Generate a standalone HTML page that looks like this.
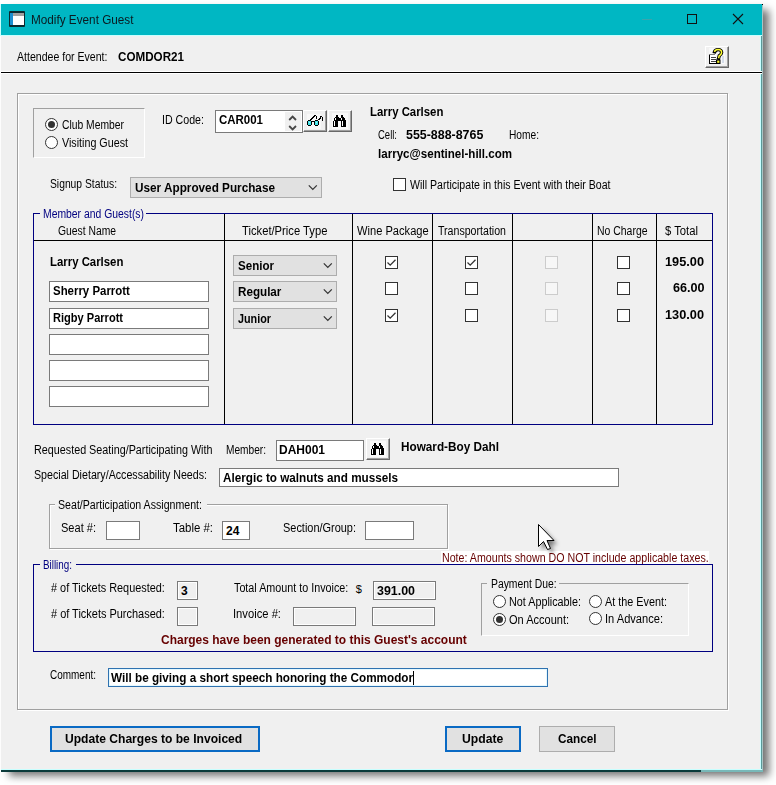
<!DOCTYPE html>
<html><head><meta charset="utf-8"><style>
html,body{margin:0;padding:0;}
body{width:776px;height:785px;position:relative;overflow:hidden;background:#fff;font-family:"Liberation Sans",sans-serif;}
.a{position:absolute;box-sizing:border-box;}
.t{position:absolute;white-space:nowrap;transform-origin:0 0;font-family:"Liberation Sans",sans-serif;}
</style></head><body>
<div class="a" style="left:1px;top:4px;width:762px;height:768px;background:#f0f0f0;box-shadow:7px 5px 8px -1px rgba(0,0,0,0.55);"></div>
<div class="a" style="left:0px;top:4px;width:1px;height:32px;background:#c8ffff;"></div>
<div class="a" style="left:760px;top:35px;width:1px;height:735px;background:#c8ffff;"></div>
<div class="a" style="left:761px;top:4px;width:1px;height:768px;background:#5a9a9a;"></div>
<div class="a" style="left:762px;top:4px;width:1px;height:768px;background:#a8c4c4;"></div>
<div class="a" style="left:1px;top:769px;width:761px;height:1px;background:#c8ffff;"></div>
<div class="a" style="left:1px;top:770px;width:700px;height:2px;background:#0a3a3a;"></div>
<div class="a" style="left:701px;top:770px;width:62px;height:2px;background:#78b8b8;"></div>
<div class="a" style="left:1px;top:4px;width:761px;height:31px;background:#00b7c3;"></div>
<div class="a" style="left:762px;top:4px;width:1px;height:1px;background:#000;"></div>
<div class="a" style="left:1px;top:35px;width:761px;height:1px;background:#c8ffff;"></div>
<div class="a" style="left:9px;top:11px;width:16px;height:16px;background:#0a2a30;border-radius:1px"></div>
<div class="a" style="left:10px;top:13px;width:14px;height:12px;background:#fff"></div>
<div class="a" style="left:10px;top:13px;width:3px;height:12px;background:#1a8fd0"></div>
<div class="a" style="left:13px;top:13px;width:11px;height:3px;background:#a0a0a0"></div>
<div id="tx0" class="t" style="left:30.5px;top:13.24px;font-size:12px;line-height:15px;font-weight:400;color:#0a1a20;transform:scaleX(0.9788);">Modify Event Guest</div>
<div class="a" style="left:642px;top:19px;width:10px;height:1px;background:#3aa5ad"></div>
<div class="a" style="left:687px;top:14px;width:10px;height:10px;border:1px solid #111;box-sizing:border-box"></div>
<svg class="a" style="left:732px;top:13px" width="12" height="12" viewBox="0 0 12 12"><path d="M1 1 L11 11 M11 1 L1 11" stroke="#111" stroke-width="1.1"/></svg>
<div id="tx1" class="t" style="left:17.3px;top:50.04px;font-size:12px;line-height:15px;font-weight:400;color:#000;transform:scaleX(0.8799);">Attendee for Event:</div>
<div id="tx2" class="t" style="left:118px;top:50.04px;font-size:12px;line-height:15px;font-weight:700;color:#000;transform:scaleX(0.9704);">COMDOR21</div>
<div class="a" style="left:705px;top:46px;width:24px;height:22px;background:#f0f0f0;border-top:1px solid #fff;border-left:1px solid #fff;border-right:1px solid #696969;border-bottom:1px solid #696969;box-shadow:inset -1px -1px 0 #a0a0a0;"></div>
<svg class="a" style="left:705px;top:46px" width="24" height="22" viewBox="0 0 24 22" shape-rendering="crispEdges">
<rect x="4" y="2" width="16" height="16" fill="#f8f8f8"/>
<rect x="4" y="8" width="6" height="1" fill="#808080"/>
<rect x="4" y="9" width="1" height="9" fill="#000"/>
<rect x="4" y="17" width="8" height="1" fill="#000"/>
<rect x="5" y="9" width="6" height="8" fill="#fff"/>
<rect x="6" y="11" width="5" height="1" fill="#404040"/>
<rect x="6" y="13" width="5" height="1" fill="#404040"/>
<rect x="6" y="15" width="5" height="1" fill="#404040"/>
<rect x="17" y="10" width="2" height="7" fill="#d4dce8"/>
</svg>
<svg class="a" style="left:705px;top:46px" width="24" height="22" viewBox="0 0 24 22">
<path d="M9.5 5.8 Q10 3.6 13 3.6 Q16.6 3.6 16.6 6.6 Q16.4 8.6 14.2 9.8 L13.6 12.2" fill="none" stroke="#000" stroke-width="3.4" stroke-linecap="square"/>
<path d="M9.5 5.8 Q10 3.6 13 3.6 Q16.6 3.6 16.6 6.6 Q16.4 8.6 14.2 9.8 L13.6 12.2" fill="none" stroke="#ffff30" stroke-width="1.5"/>
<rect x="11" y="13.5" width="4.5" height="4.5" fill="#000"/>
<rect x="12.2" y="14.6" width="2.2" height="2.2" fill="#ffff30"/>
</svg>
<div class="a" style="left:1px;top:71px;width:761px;height:1px;background:#fff;"></div>
<div class="a" style="left:1px;top:72px;width:761px;height:1px;background:#000;"></div>
<div class="a" style="left:1px;top:73px;width:761px;height:1px;background:#fff;"></div>
<div class="a" style="left:18px;top:94px;width:711px;height:617px;border:1px solid #fff;"></div>
<div class="a" style="left:17px;top:93px;width:711px;height:617px;border:1px solid #a0a0a0;"></div>
<div class="a" style="left:33px;top:108px;width:112px;height:50px;border-top:1px solid #a0a0a0;border-left:1px solid #a0a0a0;border-right:1px solid #fff;border-bottom:1px solid #fff;"></div>
<div class="a" style="left:45px;top:118px;width:13px;height:13px;border:1px solid #333;border-radius:50%;background:#fff;"><div style="position:absolute;left:2px;top:2px;width:7px;height:7px;border-radius:50%;background:#333"></div></div>
<div id="tx3" class="t" style="left:62px;top:118.04px;font-size:12px;line-height:15px;font-weight:400;color:#000;transform:scaleX(0.8593);">Club Member</div>
<div class="a" style="left:45px;top:136px;width:13px;height:13px;border:1px solid #333;border-radius:50%;background:#fff;"></div>
<div id="tx4" class="t" style="left:62px;top:136.04px;font-size:12px;line-height:15px;font-weight:400;color:#000;transform:scaleX(0.8940);">Visiting Guest</div>
<div id="tx5" class="t" style="left:161.5px;top:113.04px;font-size:12px;line-height:15px;font-weight:400;color:#000;transform:scaleX(0.8868);">ID Code:</div>
<div class="a" style="left:215px;top:110px;width:88px;height:23px;border:1px solid #7a7a7a;background:#fff;"></div>
<div id="tx6" class="t" style="left:218.6px;top:113.04px;font-size:12px;line-height:15px;font-weight:700;color:#000;transform:scaleX(0.9559);">CAR001</div>
<div class="a" style="left:285px;top:112px;width:16px;height:19px;background:#f0f0f0;"></div>
<svg class="a" style="left:286px;top:112px" width="14" height="19" viewBox="0 0 14 19"><path d="M3.2 8 L6.6 4.6 L10 8 M3.2 14 L6.6 17.4 L10 14" fill="none" stroke="#454545" stroke-width="1.8"/></svg>
<div class="a" style="left:303px;top:110px;width:24px;height:22px;background:#f0f0f0;border-top:1px solid #fff;border-left:1px solid #fff;border-right:1px solid #696969;border-bottom:1px solid #696969;box-shadow:inset -1px -1px 0 #a0a0a0;"></div>
<svg class="a" style="left:304px;top:112px" width="22" height="18" viewBox="0 0 22 18" shape-rendering="crispEdges"><rect x="3" y="2" width="14" height="15" fill="#f8f8f8"/><rect x="4" y="8" width="3" height="1" fill="#000"/><rect x="4" y="13" width="3" height="1" fill="#000"/><rect x="3" y="9" width="1" height="4" fill="#000"/><rect x="7" y="9" width="1" height="4" fill="#000"/><rect x="4" y="9" width="3" height="4" fill="#3ee0e6"/><rect x="5" y="10" width="1" height="1" fill="#a8f4f4"/><rect x="11" y="8" width="3" height="1" fill="#000"/><rect x="11" y="13" width="3" height="1" fill="#000"/><rect x="10" y="9" width="1" height="4" fill="#000"/><rect x="14" y="9" width="1" height="4" fill="#000"/><rect x="11" y="9" width="3" height="4" fill="#3ee0e6"/><rect x="12" y="10" width="1" height="1" fill="#a8f4f4"/><rect x="8" y="9" width="2" height="1" fill="#000"/><rect x="6" y="7" width="1" height="1" fill="#000"/><rect x="7" y="7" width="1" height="1" fill="#000"/><rect x="7" y="6" width="1" height="1" fill="#000"/><rect x="8" y="6" width="1" height="1" fill="#000"/><rect x="8" y="5" width="1" height="1" fill="#000"/><rect x="9" y="5" width="1" height="1" fill="#000"/><rect x="9" y="4" width="1" height="1" fill="#000"/><rect x="10" y="4" width="1" height="1" fill="#000"/><rect x="10" y="3" width="2" height="1" fill="#000"/><rect x="12" y="4" width="1" height="3" fill="#000"/><rect x="14" y="7" width="1" height="1" fill="#000"/><rect x="15" y="7" width="1" height="1" fill="#000"/><rect x="15" y="6" width="1" height="1" fill="#000"/><rect x="16" y="6" width="1" height="1" fill="#000"/><rect x="16" y="5" width="1" height="1" fill="#000"/><rect x="16" y="4" width="2" height="1" fill="#000"/><rect x="18" y="5" width="1" height="4" fill="#000"/></svg>
<div class="a" style="left:328px;top:110px;width:24px;height:22px;background:#f0f0f0;border-top:1px solid #fff;border-left:1px solid #fff;border-right:1px solid #696969;border-bottom:1px solid #696969;box-shadow:inset -1px -1px 0 #a0a0a0;"></div>
<div class="a" style="left:332px;top:113px;width:16px;height:16px;background:#fafafa"></div>
<svg class="a" style="left:333px;top:115px" width="13" height="12" viewBox="0 0 13 12" shape-rendering="crispEdges"><rect x="3" y="0" width="2" height="2" fill="#000"/><rect x="8" y="0" width="2" height="2" fill="#000"/><rect x="2" y="2" width="4" height="1" fill="#000"/><rect x="8" y="2" width="3" height="1" fill="#000"/><rect x="1" y="3" width="11" height="2" fill="#000"/><rect x="1" y="5" width="12" height="1" fill="#000"/><rect x="0" y="6" width="5" height="6" fill="#000"/><rect x="8" y="6" width="5" height="6" fill="#000"/><rect x="2" y="3" width="1" height="2" fill="#fff"/><rect x="8" y="3" width="1" height="2" fill="#fff"/><rect x="1" y="6" width="1" height="5" fill="#fff"/><rect x="9" y="6" width="1" height="5" fill="#fff"/></svg>
<div id="tx7" class="t" style="left:370px;top:105.04px;font-size:12px;line-height:15px;font-weight:700;color:#000;transform:scaleX(0.9486);">Larry Carlsen</div>
<div id="tx8" class="t" style="left:377.5px;top:128.34px;font-size:12px;line-height:15px;font-weight:400;color:#000;transform:scaleX(0.7912);">Cell:</div>
<div id="tx9" class="t" style="left:406px;top:127.92px;font-size:12.5px;line-height:15.5px;font-weight:700;color:#000;transform:scaleX(0.9928);">555-888-8765</div>
<div id="tx10" class="t" style="left:508.7px;top:128.34px;font-size:12px;line-height:15px;font-weight:400;color:#000;transform:scaleX(0.8488);">Home:</div>
<div id="tx11" class="t" style="left:377.5px;top:147.04px;font-size:12px;line-height:15px;font-weight:700;color:#000;transform:scaleX(0.9635);">larryc@sentinel-hill.com</div>
<div id="tx12" class="t" style="left:50px;top:177.04px;font-size:12px;line-height:15px;font-weight:400;color:#000;transform:scaleX(0.8583);">Signup Status:</div>
<div class="a" style="left:130px;top:177px;width:192px;height:21px;border:1px solid #adadad;background:#e1e1e1;"></div>
<svg class="a" style="left:308px;top:184.0px" width="10" height="8" viewBox="0 0 10 8"><path d="M0.8 1.4 L4.8 5.4 L8.8 1.4" fill="none" stroke="#333" stroke-width="1.25"/></svg>
<div id="tx13" class="t" style="left:135px;top:181.34px;font-size:12px;line-height:15px;font-weight:700;color:#000;transform:scaleX(0.9793);">User Approved Purchase</div>
<div class="a" style="left:393px;top:178px;width:13px;height:13px;border:1px solid #333;background:#fff;"></div>
<div id="tx14" class="t" style="left:409.5px;top:178.04px;font-size:12px;line-height:15px;font-weight:400;color:#000;transform:scaleX(0.8816);">Will Participate in this Event with their Boat</div>
<div class="a" style="left:33px;top:213px;width:680px;height:212px;border:1px solid #000080;"></div>
<div class="a" style="left:40px;top:210px;width:106px;height:7px;background:#f0f0f0;"></div>
<div id="tx15" class="t" style="left:43px;top:207.04px;font-size:12px;line-height:15px;font-weight:400;color:#000080;transform:scaleX(0.8653);">Member and Guest(s)</div>
<div class="a" style="left:224px;top:214px;width:1px;height:210px;background:#000;"></div>
<div class="a" style="left:352px;top:214px;width:1px;height:210px;background:#000;"></div>
<div class="a" style="left:432px;top:214px;width:1px;height:210px;background:#000;"></div>
<div class="a" style="left:512px;top:214px;width:1px;height:210px;background:#000;"></div>
<div class="a" style="left:592px;top:214px;width:1px;height:210px;background:#000;"></div>
<div class="a" style="left:656px;top:214px;width:1px;height:210px;background:#000;"></div>
<div class="a" style="left:34px;top:240px;width:678px;height:1px;background:#000;"></div>
<div id="tx16" class="t" style="left:57.6px;top:224.04px;font-size:12px;line-height:15px;font-weight:400;color:#000;transform:scaleX(0.8611);">Guest Name</div>
<div id="tx17" class="t" style="left:242px;top:224.04px;font-size:12px;line-height:15px;font-weight:400;color:#000;transform:scaleX(0.9346);">Ticket/Price Type</div>
<div id="tx18" class="t" style="left:357px;top:224.04px;font-size:12px;line-height:15px;font-weight:400;color:#000;transform:scaleX(0.9267);">Wine Package</div>
<div id="tx19" class="t" style="left:437.5px;top:224.04px;font-size:12px;line-height:15px;font-weight:400;color:#000;transform:scaleX(0.8838);">Transportation</div>
<div id="tx20" class="t" style="left:597.4px;top:224.04px;font-size:12px;line-height:15px;font-weight:400;color:#000;transform:scaleX(0.8702);">No Charge</div>
<div id="tx21" class="t" style="left:665.4px;top:224.04px;font-size:12px;line-height:15px;font-weight:400;color:#000;transform:scaleX(0.9391);">$ Total</div>
<div id="tx22" class="t" style="left:49.7px;top:255.04px;font-size:12px;line-height:15px;font-weight:700;color:#000;transform:scaleX(0.9486);">Larry Carlsen</div>
<div class="a" style="left:49px;top:281px;width:160px;height:21px;border:1px solid #7a7a7a;background:#fff;"></div>
<div id="tx23" class="t" style="left:53px;top:283.54px;font-size:12px;line-height:15px;font-weight:700;color:#000;transform:scaleX(0.9529);">Sherry Parrott</div>
<div class="a" style="left:49px;top:308px;width:160px;height:21px;border:1px solid #7a7a7a;background:#fff;"></div>
<div id="tx24" class="t" style="left:53px;top:310.54px;font-size:12px;line-height:15px;font-weight:700;color:#000;transform:scaleX(0.9209);">Rigby Parrott</div>
<div class="a" style="left:49px;top:334px;width:160px;height:21px;border:1px solid #7a7a7a;background:#fff;"></div>
<div class="a" style="left:49px;top:360px;width:160px;height:21px;border:1px solid #7a7a7a;background:#fff;"></div>
<div class="a" style="left:49px;top:386px;width:160px;height:21px;border:1px solid #7a7a7a;background:#fff;"></div>
<div class="a" style="left:233px;top:255px;width:104px;height:21px;border:1px solid #adadad;background:#e1e1e1;"></div>
<svg class="a" style="left:323px;top:262.0px" width="10" height="8" viewBox="0 0 10 8"><path d="M0.8 1.4 L4.8 5.4 L8.8 1.4" fill="none" stroke="#333" stroke-width="1.25"/></svg>
<div id="tx25" class="t" style="left:238px;top:259.04px;font-size:12px;line-height:15px;font-weight:700;color:#000;transform:scaleX(0.9640);">Senior</div>
<div class="a" style="left:233px;top:281px;width:104px;height:21px;border:1px solid #adadad;background:#e1e1e1;"></div>
<svg class="a" style="left:323px;top:288.0px" width="10" height="8" viewBox="0 0 10 8"><path d="M0.8 1.4 L4.8 5.4 L8.8 1.4" fill="none" stroke="#333" stroke-width="1.25"/></svg>
<div id="tx26" class="t" style="left:238px;top:285.04px;font-size:12px;line-height:15px;font-weight:700;color:#000;transform:scaleX(0.9712);">Regular</div>
<div class="a" style="left:233px;top:308px;width:104px;height:21px;border:1px solid #adadad;background:#e1e1e1;"></div>
<svg class="a" style="left:323px;top:315.0px" width="10" height="8" viewBox="0 0 10 8"><path d="M0.8 1.4 L4.8 5.4 L8.8 1.4" fill="none" stroke="#333" stroke-width="1.25"/></svg>
<div id="tx27" class="t" style="left:238px;top:312.04px;font-size:12px;line-height:15px;font-weight:700;color:#000;transform:scaleX(0.8999);">Junior</div>
<div class="a" style="left:385px;top:256px;width:13px;height:13px;border:1px solid #333;background:#fff;"><svg width="11" height="11" viewBox="0 0 11 11" style="position:absolute;left:0;top:0"><path d="M1.5 5.5 L4.2 8.2 L9.5 2.8" fill="none" stroke="#333" stroke-width="1.3"/></svg></div>
<div class="a" style="left:465px;top:256px;width:13px;height:13px;border:1px solid #333;background:#fff;"><svg width="11" height="11" viewBox="0 0 11 11" style="position:absolute;left:0;top:0"><path d="M1.5 5.5 L4.2 8.2 L9.5 2.8" fill="none" stroke="#333" stroke-width="1.3"/></svg></div>
<div class="a" style="left:545px;top:256px;width:13px;height:13px;border:1px solid #cccccc;background:#f7f7f7;"></div>
<div class="a" style="left:617px;top:256px;width:13px;height:13px;border:1px solid #333;background:#fff;"></div>
<div class="a" style="left:385px;top:282px;width:13px;height:13px;border:1px solid #333;background:#fff;"></div>
<div class="a" style="left:465px;top:282px;width:13px;height:13px;border:1px solid #333;background:#fff;"></div>
<div class="a" style="left:545px;top:282px;width:13px;height:13px;border:1px solid #cccccc;background:#f7f7f7;"></div>
<div class="a" style="left:617px;top:282px;width:13px;height:13px;border:1px solid #333;background:#fff;"></div>
<div class="a" style="left:385px;top:309px;width:13px;height:13px;border:1px solid #333;background:#fff;"><svg width="11" height="11" viewBox="0 0 11 11" style="position:absolute;left:0;top:0"><path d="M1.5 5.5 L4.2 8.2 L9.5 2.8" fill="none" stroke="#333" stroke-width="1.3"/></svg></div>
<div class="a" style="left:465px;top:309px;width:13px;height:13px;border:1px solid #333;background:#fff;"></div>
<div class="a" style="left:545px;top:309px;width:13px;height:13px;border:1px solid #cccccc;background:#f7f7f7;"></div>
<div class="a" style="left:617px;top:309px;width:13px;height:13px;border:1px solid #333;background:#fff;"></div>
<div id="tx28" class="t" style="left:665.3px;top:255.04px;font-size:12px;line-height:15px;font-weight:700;color:#000;transform:scaleX(1.0626);">195.00</div>
<div id="tx29" class="t" style="left:672.6999999999999px;top:281.04px;font-size:12px;line-height:15px;font-weight:700;color:#000;transform:scaleX(1.0522);">66.00</div>
<div id="tx30" class="t" style="left:665.3px;top:308.04px;font-size:12px;line-height:15px;font-weight:700;color:#000;transform:scaleX(1.0626);">130.00</div>
<div id="tx31" class="t" style="left:33.5px;top:443.04px;font-size:12px;line-height:15px;font-weight:400;color:#000;transform:scaleX(0.8980);">Requested Seating/Participating With</div>
<div id="tx32" class="t" style="left:225.6px;top:443.04px;font-size:12px;line-height:15px;font-weight:400;color:#000;transform:scaleX(0.8449);">Member:</div>
<div class="a" style="left:276px;top:440px;width:88px;height:21px;border:1px solid #7a7a7a;background:#fff;"></div>
<div id="tx33" class="t" style="left:279px;top:443.04px;font-size:12px;line-height:15px;font-weight:700;color:#000;transform:scaleX(0.9993);">DAH001</div>
<div class="a" style="left:366px;top:438px;width:24px;height:22px;background:#f0f0f0;border-top:1px solid #fff;border-left:1px solid #fff;border-right:1px solid #696969;border-bottom:1px solid #696969;box-shadow:inset -1px -1px 0 #a0a0a0;"></div>
<div class="a" style="left:370px;top:441px;width:16px;height:16px;background:#fafafa"></div>
<svg class="a" style="left:371px;top:443px" width="13" height="12" viewBox="0 0 13 12" shape-rendering="crispEdges"><rect x="3" y="0" width="2" height="2" fill="#000"/><rect x="8" y="0" width="2" height="2" fill="#000"/><rect x="2" y="2" width="4" height="1" fill="#000"/><rect x="8" y="2" width="3" height="1" fill="#000"/><rect x="1" y="3" width="11" height="2" fill="#000"/><rect x="1" y="5" width="12" height="1" fill="#000"/><rect x="0" y="6" width="5" height="6" fill="#000"/><rect x="8" y="6" width="5" height="6" fill="#000"/><rect x="2" y="3" width="1" height="2" fill="#fff"/><rect x="8" y="3" width="1" height="2" fill="#fff"/><rect x="1" y="6" width="1" height="5" fill="#fff"/><rect x="9" y="6" width="1" height="5" fill="#fff"/></svg>
<div id="tx34" class="t" style="left:401px;top:440.04px;font-size:12px;line-height:15px;font-weight:700;color:#000;transform:scaleX(0.9798);">Howard-Boy Dahl</div>
<div id="tx35" class="t" style="left:33.5px;top:468.04px;font-size:12px;line-height:15px;font-weight:400;color:#000;transform:scaleX(0.8883);">Special Dietary/Accessability Needs:</div>
<div class="a" style="left:219px;top:468px;width:400px;height:19px;border:1px solid #7a7a7a;background:#fff;"></div>
<div id="tx36" class="t" style="left:223px;top:471.04px;font-size:12px;line-height:15px;font-weight:700;color:#000;transform:scaleX(0.9755);">Alergic to walnuts and mussels</div>
<div class="a" style="left:50px;top:505px;width:399px;height:45px;border:1px solid #fff;"></div>
<div class="a" style="left:49px;top:504px;width:399px;height:45px;border:1px solid #a0a0a0;"></div>
<div class="a" style="left:55px;top:500px;width:152px;height:9px;background:#f0f0f0;"></div>
<div id="tx37" class="t" style="left:58.4px;top:498.04px;font-size:12px;line-height:15px;font-weight:400;color:#000;transform:scaleX(0.8847);">Seat/Participation Assignment:</div>
<div id="tx38" class="t" style="left:61.2px;top:521.04px;font-size:12px;line-height:15px;font-weight:400;color:#000;transform:scaleX(0.9203);">Seat #:</div>
<div class="a" style="left:106px;top:521px;width:34px;height:19px;border:1px solid #7a7a7a;background:#fff;"></div>
<div id="tx39" class="t" style="left:173.2px;top:521.04px;font-size:12px;line-height:15px;font-weight:400;color:#000;transform:scaleX(0.9517);">Table #:</div>
<div class="a" style="left:222px;top:521px;width:28px;height:19px;border:1px solid #7a7a7a;background:#fff;"></div>
<div id="tx40" class="t" style="left:226px;top:524.04px;font-size:12px;line-height:15px;font-weight:700;color:#000;">24</div>
<div id="tx41" class="t" style="left:282.5px;top:521.04px;font-size:12px;line-height:15px;font-weight:400;color:#000;transform:scaleX(0.9120);">Section/Group:</div>
<div class="a" style="left:365px;top:521px;width:49px;height:19px;border:1px solid #7a7a7a;background:#fff;"></div>
<div class="a" style="left:441px;top:551px;width:268px;height:13px;background:#fff;"></div>
<div id="tx42" class="t" style="left:441.5px;top:551.04px;font-size:12px;line-height:15px;font-weight:400;color:#660000;transform:scaleX(0.8872);">Note: Amounts shown DO NOT include applicable taxes.</div>
<div class="a" style="left:33px;top:564px;width:680px;height:88px;border:1px solid #000080;"></div>
<div class="a" style="left:40px;top:560px;width:36px;height:9px;background:#f0f0f0;"></div>
<div id="tx43" class="t" style="left:43px;top:558.04px;font-size:12px;line-height:15px;font-weight:400;color:#000080;transform:scaleX(0.8202);">Billing:</div>
<div id="tx44" class="t" style="left:50.8px;top:581.04px;font-size:12px;line-height:15px;font-weight:400;color:#000;transform:scaleX(0.9082);"># of Tickets Requested:</div>
<div class="a" style="left:177px;top:581px;width:21px;height:19px;border:1px solid #7a7a7a;background:#f0f0f0;box-shadow:inset 0 0 0 1px #fff;"></div>
<div id="tx45" class="t" style="left:181px;top:584.04px;font-size:12px;line-height:15px;font-weight:700;color:#000;">3</div>
<div id="tx46" class="t" style="left:50.8px;top:607.04px;font-size:12px;line-height:15px;font-weight:400;color:#000;transform:scaleX(0.9131);"># of Tickets Purchased:</div>
<div class="a" style="left:177px;top:607px;width:21px;height:19px;border:1px solid #7a7a7a;background:#f0f0f0;box-shadow:inset 0 0 0 1px #fff;"></div>
<div id="tx47" class="t" style="left:234px;top:581.04px;font-size:12px;line-height:15px;font-weight:400;color:#000;transform:scaleX(0.8971);">Total Amount to Invoice:</div>
<div id="tx48" class="t" style="left:355.7px;top:581.89px;font-size:11px;line-height:14px;font-weight:400;color:#000;">$</div>
<div class="a" style="left:373px;top:581px;width:63px;height:19px;border:1px solid #7a7a7a;background:#f0f0f0;box-shadow:inset 0 0 0 1px #fff;"></div>
<div id="tx49" class="t" style="left:377px;top:584.04px;font-size:12px;line-height:15px;font-weight:700;color:#000;transform:scaleX(1.0353);">391.00</div>
<div id="tx50" class="t" style="left:233.4px;top:607.04px;font-size:12px;line-height:15px;font-weight:400;color:#000;transform:scaleX(0.9343);">Invoice #:</div>
<div class="a" style="left:293px;top:607px;width:63px;height:19px;border:1px solid #7a7a7a;background:#f0f0f0;box-shadow:inset 0 0 0 1px #fff;"></div>
<div class="a" style="left:372px;top:607px;width:63px;height:19px;border:1px solid #7a7a7a;background:#f0f0f0;box-shadow:inset 0 0 0 1px #fff;"></div>
<div id="tx51" class="t" style="left:161.4px;top:633.04px;font-size:12px;line-height:15px;font-weight:700;color:#660000;transform:scaleX(0.9984);">Charges have been generated to this Guest's account</div>
<div class="a" style="left:481px;top:583px;width:208px;height:53px;border-top:1px solid #a0a0a0;border-left:1px solid #a0a0a0;border-right:1px solid #fff;border-bottom:1px solid #fff;"></div>
<div class="a" style="left:487px;top:579px;width:72px;height:10px;background:#f0f0f0;"></div>
<div id="tx52" class="t" style="left:490.7px;top:577.04px;font-size:12px;line-height:15px;font-weight:400;color:#000;transform:scaleX(0.8639);">Payment Due:</div>
<div class="a" style="left:493px;top:595px;width:13px;height:13px;border:1px solid #333;border-radius:50%;background:#fff;"></div>
<div id="tx53" class="t" style="left:509px;top:595.04px;font-size:12px;line-height:15px;font-weight:400;color:#000;transform:scaleX(0.8993);">Not Applicable:</div>
<div class="a" style="left:589px;top:595px;width:13px;height:13px;border:1px solid #333;border-radius:50%;background:#fff;"></div>
<div id="tx54" class="t" style="left:605px;top:595.04px;font-size:12px;line-height:15px;font-weight:400;color:#000;transform:scaleX(0.9022);">At the Event:</div>
<div class="a" style="left:493px;top:613px;width:13px;height:13px;border:1px solid #333;border-radius:50%;background:#fff;"><div style="position:absolute;left:2px;top:2px;width:7px;height:7px;border-radius:50%;background:#333"></div></div>
<div id="tx55" class="t" style="left:509px;top:613.04px;font-size:12px;line-height:15px;font-weight:400;color:#000;transform:scaleX(0.9178);">On Account:</div>
<div class="a" style="left:589px;top:612px;width:13px;height:13px;border:1px solid #333;border-radius:50%;background:#fff;"></div>
<div id="tx56" class="t" style="left:605px;top:612.04px;font-size:12px;line-height:15px;font-weight:400;color:#000;transform:scaleX(0.9248);">In Advance:</div>
<div id="tx57" class="t" style="left:49.7px;top:668.04px;font-size:12px;line-height:15px;font-weight:400;color:#000;transform:scaleX(0.8309);">Comment:</div>
<div class="a" style="left:108px;top:668px;width:440px;height:19px;border:1px solid #2f72b0;background:#fff;box-shadow:inset 0 0 0 1px #e4f8ff;"></div>
<div id="tx58" class="t" style="left:111px;top:671.04px;font-size:12px;line-height:15px;font-weight:700;color:#000;transform:scaleX(0.9766);">Will be giving a short speech honoring the Commodor</div>
<div class="a" style="left:413px;top:671px;width:1px;height:14px;background:#000;"></div>
<div class="a" style="left:50px;top:726px;width:210px;height:26px;border:2px solid #0a6ac4;background:#e1e1e1;"></div>
<div id="tx59" class="t" style="left:65.2px;top:732.04px;font-size:12px;line-height:15px;font-weight:700;color:#000;transform:scaleX(1.0066);">Update Charges to be Invoiced</div>
<div class="a" style="left:445px;top:726px;width:76px;height:26px;border:2px solid #0a6ac4;background:#e1e1e1;"></div>
<div id="tx60" class="t" style="left:462.2px;top:732.04px;font-size:12px;line-height:15px;font-weight:700;color:#000;transform:scaleX(1.0154);">Update</div>
<div class="a" style="left:539px;top:726px;width:76px;height:26px;border:1px solid #adadad;background:#e1e1e1;"></div>
<div id="tx61" class="t" style="left:557.6px;top:732.04px;font-size:12px;line-height:15px;font-weight:700;color:#000;transform:scaleX(0.9807);">Cancel</div>
<svg class="a" style="left:530px;top:516px;overflow:visible" width="40" height="44" viewBox="0 0 40 44">
<defs><filter id="sh" x="-50%" y="-50%" width="200%" height="200%"><feGaussianBlur stdDeviation="2.2"/></filter></defs>
<path d="M12 12 L12 34 L17 29 L21 37 L24 36 L20.5 28.5 L27.5 28.5 Z" fill="#000" opacity="0.5" filter="url(#sh)"/>
<path d="M8.5 8.5 L8.5 30.5 L13.5 25.5 L17.5 33.5 L20.5 32.5 L17 24.5 L24 24.5 Z" fill="#fff" stroke="#000" stroke-width="1" stroke-linejoin="miter"/>
</svg>
</body></html>
